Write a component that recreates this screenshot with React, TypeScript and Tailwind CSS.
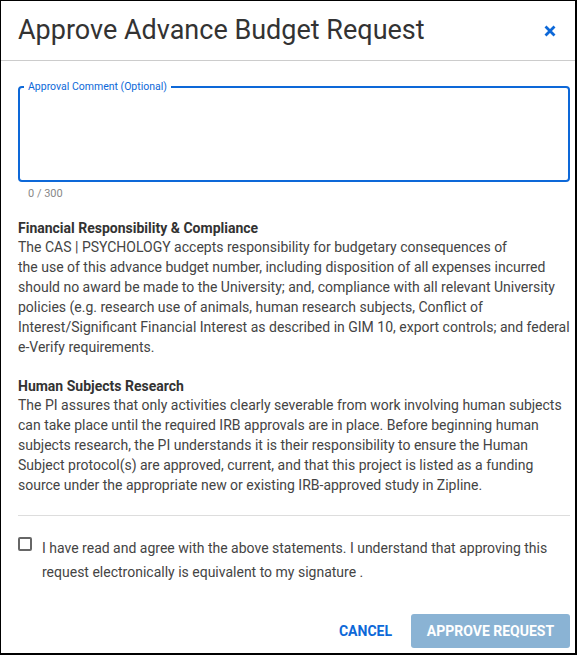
import { useState } from 'react';

const BLUE = 'text-[#0d68d8]';

const CloseIcon = () => (
  <svg width="12" height="12" viewBox="0 0 12 12" aria-hidden="true">
    <path d="M1.5 1.5 L10.5 10.5 M10.5 1.5 L1.5 10.5" stroke="#0d68d8" strokeWidth="2.8" strokeLinecap="butt" />
  </svg>
);

export default function App() {
  const [comment, setComment] = useState('');
  const [agreed, setAgreed] = useState(false);

  return (
    <div className="flex h-[655px] w-[577px] flex-col border-t border-l border-r-2 border-b-2 border-black bg-white font-[Roboto,sans-serif]">
      <header className="flex h-[60px] shrink-0 items-center justify-between border-b border-[#cccccc] pl-[17px] pr-[19px]">
        <h1 className="text-[27px] font-normal text-[#333333]">Approve Advance Budget Request</h1>
        <button className="flex h-[12px] w-[12px] items-center justify-center" aria-label="Close">
          <CloseIcon />
        </button>
      </header>

      <div className="flex flex-1 flex-col pl-[17px] pr-[5px]">
        <fieldset className="mt-[20px] h-[101px] rounded-[4px] border-2 border-[#0d68d8] px-[4px]">
          <legend className={`px-[4px] text-[10.5px] leading-[12px] ${BLUE}`}>Approval Comment (Optional)</legend>
          <textarea
            value={comment}
            onChange={(e) => setComment(e.target.value.slice(0, 300))}
            className="h-full w-full resize-none px-[4px] text-[14px] text-[#333] outline-none"
          />
        </fieldset>
        <div className="mt-[5px] pl-[10px] text-[11px] leading-[14px] text-[#888888]">{comment.length} / 300</div>

        <h2 className="mt-[18px] text-[14px] font-bold leading-[18px] text-[#333333]">
          Financial Responsibility &amp; Compliance
        </h2>
        <p className="text-[14px] leading-5 text-[#444444]">
          The CAS | PSYCHOLOGY accepts responsibility for budgetary consequences of
          <br />
          the use of this advance budget number, including disposition of all expenses incurred should no award be made
          to the University; and, compliance with all relevant University policies (e.g. research use of animals, human
          research subjects, Conflict of Interest/Significant Financial Interest as described in GIM 10, export controls;
          and federal e-Verify requirements.
        </p>

        <h2 className="mt-[20px] text-[14px] font-bold leading-[18px] text-[#333333]">Human Subjects Research</h2>
        <p className="text-[14px] leading-5 text-[#444444]">
          The PI assures that only activities clearly severable from work involving human subjects can take place until
          the required IRB approvals are in place. Before beginning human subjects research, the PI understands it is
          their responsibility to ensure the Human Subject protocol(s) are approved, current, and that this project is
          listed as a funding source under the appropriate new or existing IRB-approved study in Zipline.
        </p>

        <div className="mt-[20px] border-t border-[#dddddd]" />

        <label className="mt-[20px] flex cursor-pointer items-start gap-[10px]">
          <span
            onClick={() => setAgreed(!agreed)}
            className={`mt-[1px] h-[14px] w-[14px] shrink-0 rounded-[2px] border-2 ${
              agreed ? 'border-[#0d68d8] bg-[#0d68d8]' : 'border-[#666666]'
            }`}
          />
          <span className="text-[14px] leading-6 text-[#444444]">
            I have read and agree with the above statements. I understand that approving this request electronically is
            equivalent to my signature .
          </span>
        </label>

        <div className="mt-auto flex items-center justify-end gap-[11px] pb-[5px]">
          <button className={`px-[8px] text-[14px] font-bold ${BLUE}`}>CANCEL</button>
          <button
            disabled={!agreed}
            className="h-[34px] w-[159px] rounded-[3px] bg-[#8ab3d4] text-[14px] font-bold text-white"
          >
            APPROVE REQUEST
          </button>
        </div>
      </div>
    </div>
  );
}
